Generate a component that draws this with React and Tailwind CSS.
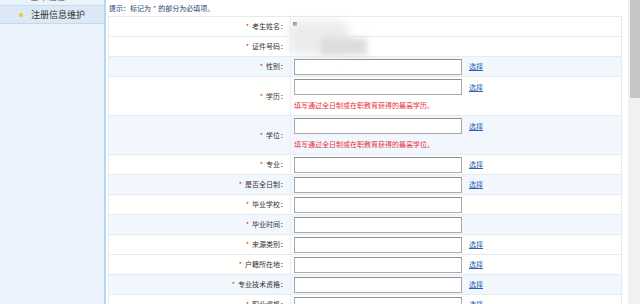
import React from "react";

const rows = [
  { label: "考生姓名", kind: "text", bg: "white" },
  { label: "证件号码", kind: "text", bg: "white" },
  { label: "性别", kind: "select", bg: "blue" },
  { label: "学历", kind: "select", bg: "white", hint: "填写通过全日制或在职教育获得的最高学历。" },
  { label: "学位", kind: "select", bg: "blue", hint: "填写通过全日制或在职教育获得的最高学位。" },
  { label: "专业", kind: "select", bg: "white" },
  { label: "是否全日制", kind: "select", bg: "blue" },
  { label: "毕业学校", kind: "input", bg: "white" },
  { label: "毕业时间", kind: "input", bg: "blue" },
  { label: "来源类别", kind: "select", bg: "white" },
  { label: "户籍所在地", kind: "select", bg: "white" },
  { label: "专业技术资格", kind: "select", bg: "blue" },
  { label: "职业资格", kind: "select", bg: "white" },
];

const Field = ({ select }) => (
  <div className="flex items-center">
    <div className="h-[16px] w-[168px] border border-[#a9a9a9] border-t-[#8f8f8f] bg-white" />
    {select && (
      <a className="ml-[7px] text-[7px] leading-none text-[#2a5fb4] underline">选择</a>
    )}
  </div>
);

const Row = ({ row }) => {
  const tall = !!row.hint;
  return (
    <div
      className={`flex shrink-0 border-b border-[#e2ecf5] ${tall ? "h-[39px]" : "h-[20px]"} ${
        row.bg === "blue" ? "bg-[#f1f7fd]" : "bg-[#fffffd]"
      }`}
    >
      <div className="flex w-[181px] items-center justify-end pr-[3px] text-[7px] text-[#333]">
        <span className="mr-[3px] text-[#e0252f]">*</span>
        <span>{row.label}</span>
        <span>：</span>
      </div>
      <div
        className={`flex flex-1 flex-col border-l border-[#eaf2f9] pl-[3px] ${
          tall ? "justify-start pt-[2px]" : "justify-center"
        }`}
      >
        {row.kind !== "text" && <Field select={row.kind === "select"} />}
        {tall && (
          <div className="mt-[7px] text-[7px] leading-none text-[#e8323c]">{row.hint}</div>
        )}
      </div>
    </div>
  );
};

export default function App() {
  return (
    <div className="flex h-[304px] w-[640px] overflow-hidden bg-white font-['Noto_Sans_CJK_SC',sans-serif]">
      {/* sidebar */}
      <div className="flex w-[106px] shrink-0 flex-col border-r-2 border-[#b9d6ec] bg-[#eaf3fb]">
        <div className="-mt-[12px] flex h-[18px] shrink-0 items-center border-b border-[#c8dcee] pl-[30px] text-[9px] text-[#555]">
          基本信息
        </div>
        <div className="flex h-[18px] shrink-0 items-center border-b border-[#c4d9ec] bg-[#dbe9f6] pl-[19px] text-[9px] text-[#333]">
          <span className="mr-[8px] h-[4px] w-[4px] rounded-full bg-[#f1c232]" />
          注册信息维护
        </div>
      </div>

      {/* main */}
      <div className="flex w-[516px] shrink-0 flex-col pl-[2px]">
        <div className="flex h-[16px] shrink-0 items-center pl-[1px] text-[7px] text-[#23406e]">
          提示：标记为 <span className="mx-[2px] text-[#e0252f]">*</span> 的部分为必填项。
        </div>
        <div className="relative flex flex-col border-x border-t border-[#e2ecf5]">
          {rows.map((r) => (
            <Row key={r.label} row={r} />
          ))}
          <div className="absolute left-[184px] top-[5px] h-[4px] w-[4px] bg-[#555]" />
          <div className="absolute left-[180px] top-[4px] h-[34px] w-[60px] rounded-[10px] bg-[#ececec] blur-[4px]" />
          <div className="absolute left-[212px] top-[21px] h-[17px] w-[46px] bg-[#dcdcdc] blur-[3px]" />
        </div>
      </div>

      <div className="w-[6px] shrink-0" />

      {/* scrollbar */}
      <div className="flex w-[12px] shrink-0 flex-col bg-[#f1f1f1] pl-[2px]">
        <div className="h-[98px] w-full bg-[#c6c6c6]" />
      </div>
    </div>
  );
}
